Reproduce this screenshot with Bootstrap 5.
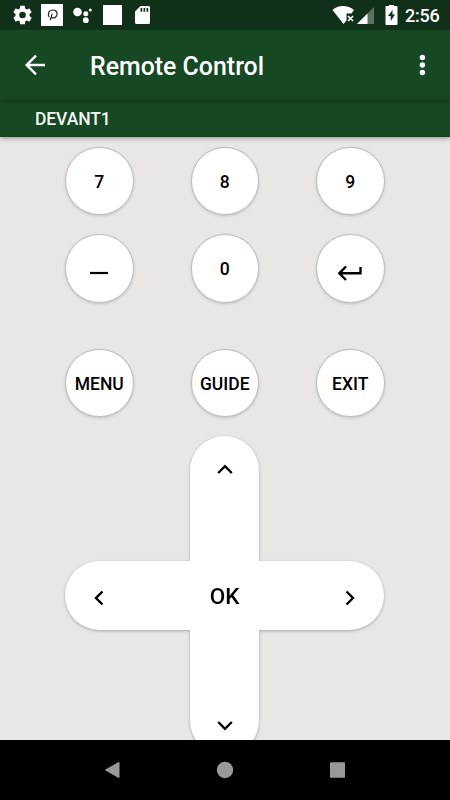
<!DOCTYPE html>
<html lang="en">
<head>
<meta charset="utf-8">
<meta name="viewport" content="width=device-width, initial-scale=1">
<title>Remote Control</title>
<link href="https://cdn.jsdelivr.net/npm/bootstrap@5.3.0/dist/css/bootstrap.min.css" rel="stylesheet">
<style>
  body { font-family: Roboto, sans-serif; background: #e8e7e6; color: #000; }
  svg { display: block; flex: none; }
  .phone { width: 450px; height: 800px; }
  .status-bar { height: 30px; flex: none; background: #10301a; }
  .status-bar .clock { font-size: 18px; line-height: 30px; padding-top: 1px; font-weight: 500; width: 35px; letter-spacing: -.2px; margin: 0 10px 0 2px; }
  .app-bar { height: 70px; flex: none; background: #164823; }
  .app-bar h1 { font-size: 24.9px; line-height: 30px; font-weight: 500; margin: 3px 0 0 44px; }
  .device-bar { height: 37px; flex: none; background: linear-gradient(#123b1c, #164823 4px); border-bottom: 1px solid #0b4511; box-shadow: 0 1px 5px rgba(0,0,0,.4); z-index: 1; padding: 3px 0 0 35px; font-size: 17.5px; letter-spacing: -.1px; font-weight: 500; color: #f4f7f4; }
  .keys { width: 319px; margin-left: 65px; padding-top: 9.5px; }
  .key { width: 68.5px; height: 68.5px; background: #fff; border: 1px solid #bdbdbd; box-shadow: 0 1px 3px rgba(0,0,0,.16); font-size: 17.5px; font-weight: 500; color: #000; white-space: nowrap; }
  .key-row { margin: 0 -.5px 19px 0; }
  .key-row.menu-row { margin-top: 46px; margin-bottom: 18.5px; }
  .key span { position: relative; top: 1px; }
  .pad { display: grid; grid-template: 125px 69px 125px / 125px 69px 125px; filter: drop-shadow(0 1.5px 1.5px rgba(0,0,0,.28)); }
  .arm { background: #fff; border-radius: 35px; }
  .arm-x { grid-area: 2 / 1 / 3 / 4; padding: 5px 29px 0; }
  .arm-y { grid-area: 1 / 2 / 4 / 3; padding: 28px 0 24px; }
  .ok { grid-area: 2 / 2; font-size: 22.5px; font-weight: 500; z-index: 1; padding-top: 4px; }
  .nav-keys { height: 60px; flex: none; background: #000; z-index: 2; }
</style>
<script src="https://cdn.jsdelivr.net/npm/bootstrap@5.3.0/dist/js/bootstrap.bundle.min.js"></script>
</head>
<body class="overflow-hidden">
<div class="phone d-flex flex-column overflow-hidden">
  <div class="status-bar d-flex align-items-center justify-content-between text-white">
    <svg width="160" height="30" fill="#fff">
      <g transform="translate(11.3 3.8) scale(.935)"><path fill-rule="evenodd" d="M19.43 12.98c.04-.32.07-.64.07-.98s-.03-.66-.07-.98l2.11-1.65c.19-.15.24-.42.12-.64l-2-3.46c-.12-.22-.39-.3-.61-.22l-2.49 1c-.52-.4-1.08-.73-1.69-.98l-.38-2.65C14.46 2.18 14.25 2 14 2h-4c-.25 0-.46.18-.49.42l-.38 2.65c-.61.25-1.17.59-1.69.98l-2.49-1c-.23-.09-.49 0-.61.22l-2 3.46c-.13.22-.07.49.12.64l2.11 1.65c-.04.32-.07.65-.07.98s.03.66.07.98l-2.11 1.65c-.19.15-.24.42-.12.64l2 3.46c.12.22.39.3.61.22l2.49-1c.52.4 1.08.73 1.69.98l.38 2.65c.03.24.24.42.49.42h4c.25 0 .46-.18.49-.42l.38-2.65c.61-.25 1.17-.59 1.69-.98l2.49 1c.23.09.49 0 .61-.22l2-3.46c.12-.22.07-.49-.12-.64zM12 15.500a3.500 3.500 0 1 1 0-7 3.500 3.500 0 0 1 0 7z"/></g>
      <path d="M41 4h22v22H41z"/>
      <path d="M49.300 17.300c-2-4-.5-7.300 3.200-7.300 3.400 0 4.900 1.800 4.500 4.300-.4 2.700-2.500 3.900-5.200 3.600M52 13.800c-.2 2-.8 4.800-2 6.400" fill="none" stroke="#17251b" stroke-width="1.200"/>
      <circle cx="77.500" cy="12" r="4.300"/><circle cx="85.800" cy="13.800" r="2.500"/><circle cx="90.300" cy="10" r="1.500"/><circle cx="85.800" cy="20.200" r="2.900"/>
      <path d="M103 5h19v20h-19z"/>
      <path fill-rule="evenodd" d="M140.500 6h8a1.500 1.500 0 0 1 1.500 1.500v15a1.500 1.500 0 0 1-1.500 1.500h-12a1.500 1.500 0 0 1-1.500-1.500V11.500zM140.500 8v3.700h1.700V8zm3 0v3.700h1.700V8zm3 0v3.700h1.700V8z"/>
    </svg>
    <div class="d-flex align-items-center">
      <svg width="80" height="30" fill="#fff">
        <path d="M9.500 10C15 4.800 25 4.800 31 10l-2.500 3.500H23.500V20.500L20.500 24z"/>
        <path d="M25 16l5 5m0-5l-5 5" stroke="#fff" stroke-width="1.700"/>
        <path d="M51 7v17H34z" fill="#587260"/><path d="M44.500 13.500v10.500H34z"/>
        <g transform="translate(-1)"><path d="M64.500 6h2.500V5h5v1h2.500a1 1 0 0 1 1 1v17a1 1 0 0 1-1 1h-10a1 1 0 0 1-1-1V7a1 1 0 0 1 1-1z"/>
        <path d="M70.500 10v4.500H73L68.700 21v-5H66z" fill="#10301a"/></g>
      </svg>
      <span class="clock">2:56</span>
    </div>
  </div>

  <header class="app-bar d-flex align-items-center text-white">
    <svg width="22" height="22" class="ms-4" fill="none" stroke="#fff" stroke-width="2.400"><path d="M21 11H3M12 1.700L2.700 11l9.300 9.300"/></svg>
    <h1>Remote Control</h1>
    <svg class="ms-auto me-4" width="8" height="24" fill="#fff"><circle cx="4.400" cy="4.500" r="2.700"/><circle cx="4.400" cy="12" r="2.700"/><circle cx="4.400" cy="19.500" r="2.700"/></svg>
  </header>
  <div class="device-bar position-relative d-flex align-items-center"><span>DEVANT1</span></div>

  <main class="keys flex-grow-1" style="min-height:0">
    <div class="key-row d-flex justify-content-between">
      <button class="key rounded-circle p-0"><span>7</span></button>
      <button class="key rounded-circle p-0"><span>8</span></button>
      <button class="key rounded-circle p-0"><span>9</span></button>
    </div>
    <div class="key-row d-flex justify-content-between">
      <button class="key rounded-circle p-0 d-flex align-items-center justify-content-center" aria-label="Dash"><svg width="18" height="14"><path d="M0 12h18" stroke="#000" stroke-width="2.200"/></svg></button>
      <button class="key rounded-circle p-0"><span>0</span></button>
      <button class="key rounded-circle p-0 d-flex align-items-center justify-content-center" aria-label="Enter"><svg width="26" height="26" fill="none" stroke="#000" stroke-width="2.400"><path d="M23.500 12v6.300H2.500M9 11.500l-6.700 6.800L9 25"/></svg></button>
    </div>
    <div class="key-row menu-row d-flex justify-content-between">
      <button class="key rounded-circle p-0"><span>MENU</span></button>
      <button class="key rounded-circle p-0"><span>GUIDE</span></button>
      <button class="key rounded-circle p-0"><span>EXIT</span></button>
    </div>
    <div class="pad">
      <div class="arm arm-x d-flex align-items-center justify-content-between">
        <svg width="10" height="16" fill="none" stroke="#000" stroke-width="2.400"><path d="M8.500 1.500L2 8l6.500 6.500"/></svg>
        <svg width="10" height="16" fill="none" stroke="#000" stroke-width="2.400"><path d="M1.500 1.500L8 8l-6.500 6.500"/></svg>
      </div>
      <div class="arm arm-y d-flex flex-column align-items-center justify-content-between">
        <svg width="16" height="10" fill="none" stroke="#000" stroke-width="2.400"><path d="M1.200 9L8 2.200 14.800 9"/></svg>
        <svg width="16" height="10" fill="none" stroke="#000" stroke-width="2.400"><path d="M1.200 1L8 7.800 14.800 1"/></svg>
      </div>
      <div class="ok d-flex align-items-center justify-content-center">OK</div>
    </div>
  </main>

  <nav class="nav-keys d-flex align-items-center justify-content-center">
    <svg width="450" height="60" fill="#999"><path d="M105.500 30L119 22.300v15.400z" stroke="#999" stroke-linejoin="round"/><circle cx="225" cy="30" r="8.200"/><rect x="330" y="22.200" width="15" height="15.500" rx=".7"/></svg>
  </nav>
</div>
</body>
</html>
